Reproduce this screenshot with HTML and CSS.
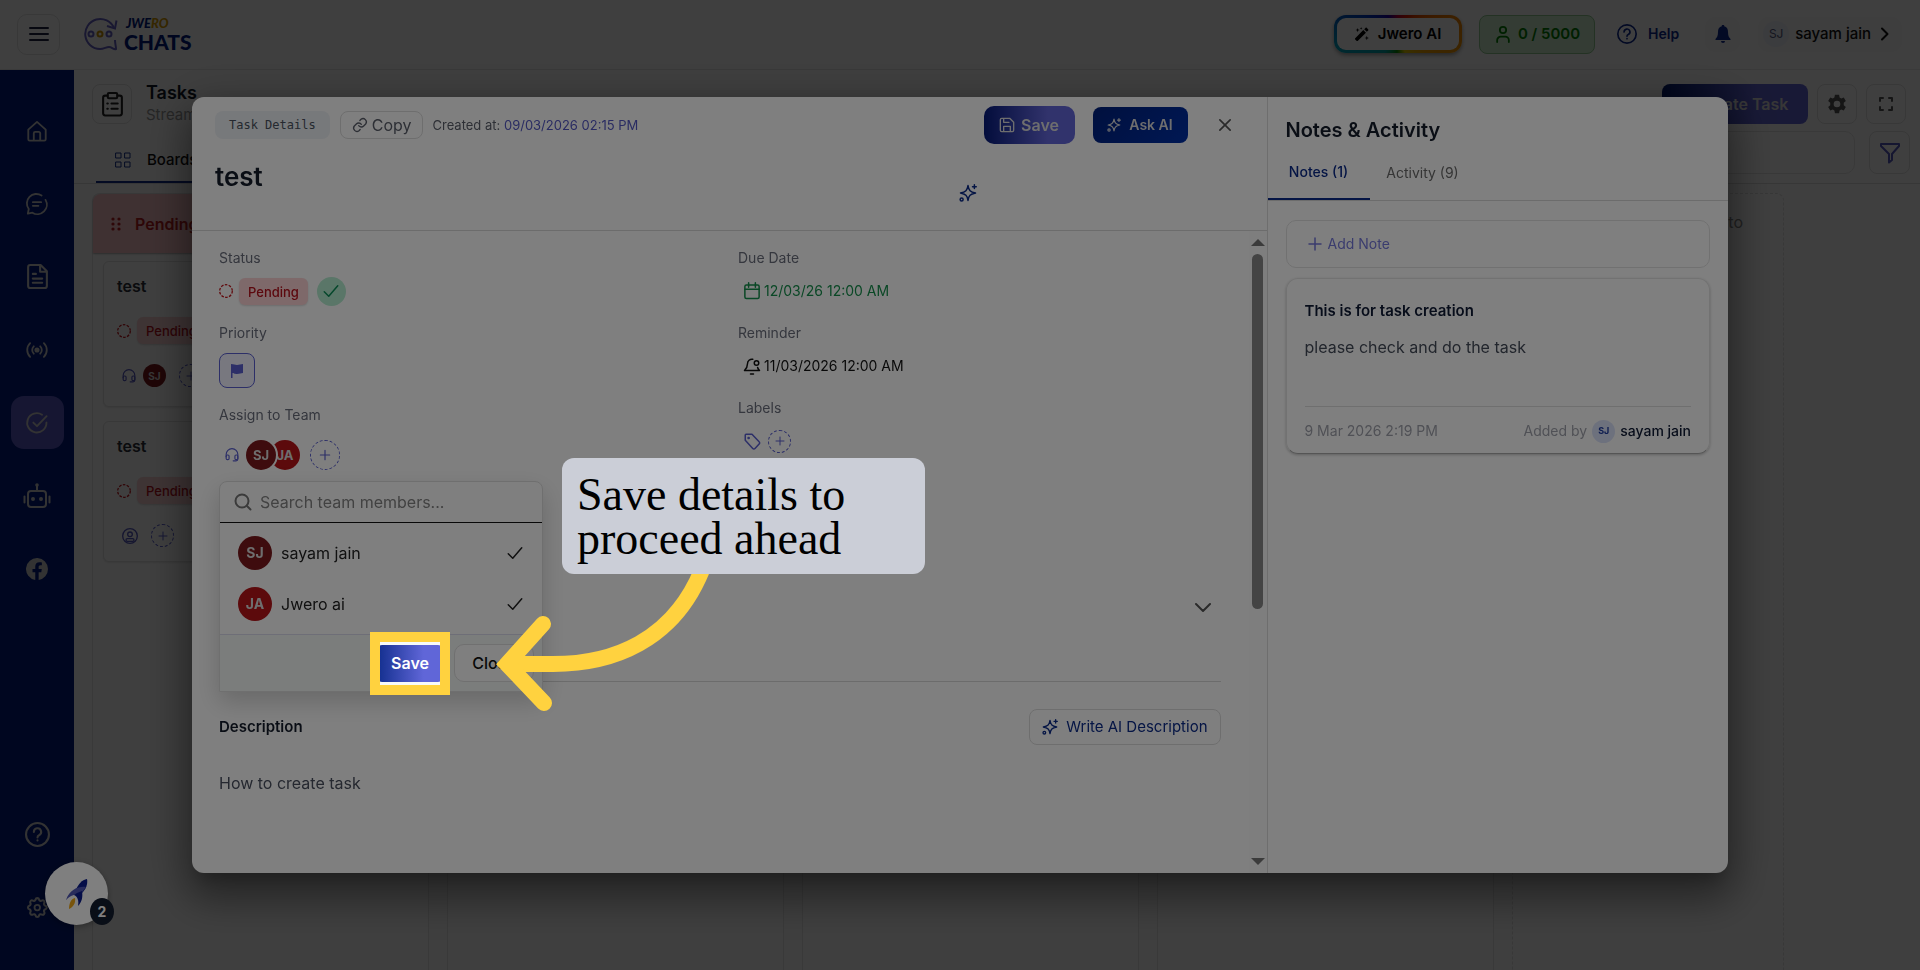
FILE: index.html
```
<!DOCTYPE html>
<html lang="en">
<head>
<meta charset="utf-8">
<title>Jwero Chats - Tasks</title>
<link rel="stylesheet" href="styles.css">
</head>
<body>
<svg class="sprite" aria-hidden="true">
  <symbol id="i-plus" viewBox="0 0 24 24"><path d="M12 4v16M4 12h16"/></symbol>
  <symbol id="i-check" viewBox="0 0 24 24"><path d="M3 13l6 6L21 5"/></symbol>
  <symbol id="i-ring" viewBox="0 0 14 14"><circle cx="7" cy="7" r="6.300" stroke-width="1.300" stroke-dasharray="2.600 1.360" stroke-linecap="butt"/></symbol>
  <symbol id="i-help" viewBox="0 0 24 24"><circle cx="12" cy="12" r="11"/><path d="M8.500 9.500a3.500 3.500 0 1 1 5 3.200c-1 .5-1.500 1-1.500 2.100M12 17.500v.3"/></symbol>
  <symbol id="i-headset" viewBox="0 0 24 24"><path d="M2 15v-4a10 10 0 0 1 20 0v8a3 3 0 0 1-3 3h-5"/><rect x="2" y="12" width="5" height="8" rx="2"/><rect x="17" y="12" width="5" height="8" rx="2"/></symbol>
  <symbol id="i-spark" viewBox="0 0 24 24"><path d="M12 2c1 6.500 3 8.500 10 10-7 1.500-9 3.500-10 10-1-6.500-3-8.500-10-10 7-1.500 9-3.500 10-10z"/><path d="M20.500 1v5M18 3.500h5"/><circle cx="3.500" cy="20.500" r="2"/></symbol>
</svg>

<div class="app">
  <header class="topbar">
    <button class="menu" aria-label="Menu"><svg class="ic s20" viewBox="0 0 20 20"><path d="M1 4h18M1 10h18M1 16h18"/></svg></button>
    <a class="logo" href="#" aria-label="Jwero Chats">
      <svg class="logo-mark" viewBox="0 0 34 34"><path d="M30 11A15 15 0 1 0 16 32c4 0 6-2 9-2 3 0 5 3 7 2 0-3-1-5-1-9"/><path d="M23 9l8 2.500 1.500-8"/><circle cx="7" cy="17" r="2.500"/><circle cx="25" cy="17" r="2.500"/><circle class="gold" cx="16" cy="17" r="2.500"/></svg>
      <span class="logo-text"><span class="logo-small">JWE<b>RO</b></span><span class="logo-big">CHATS</span></span>
    </a>
    <div class="top-right">
      <button class="ai"><svg class="s14 solid" viewBox="0 0 16 16"><path d="M0 13L9.500 3.500l3 3L3 16H2l-2-2zM10.500 2.500l1.500-1.500c.5-.5 1-.5 1.500 0l1.500 1.500c.5.5.5 1 0 1.500l-1.500 1.500zM3 1l.6 1.900 1.900.6-1.900.6L3 6l-.6-1.900L.5 3.500l1.900-.6zM13.500 10l.6 1.900 1.900.6-1.900.6-.6 1.900-.6-1.900-1.900-.6 1.900-.6zM7 0l.4 1.100 1.100.4-1.100.4L7 3l-.4-1.100-1.100-.4 1.100-.4z"/></svg>Jwero AI</button>
      <span class="quota"><svg class="ic s18" viewBox="0 0 20 20"><circle cx="10" cy="5.500" r="3.500"/><path d="M3.500 19v-2a4 4 0 0 1 4-4h5a4 4 0 0 1 4 4v2"/></svg>0 / 5000</span>
      <a class="help" href="#"><svg class="ic s20"><use href="#i-help"/></svg>Help</a>
      <button class="bell" aria-label="Notifications"><svg class="s20 solid" viewBox="0 0 20 20"><path d="M10 1a1 1 0 0 1 1.200 1.200C14 3 15 5 15 8c0 4 1 5.500 2.500 7v1h-15v-1C4 13.500 5 12 5 8c0-3 1-5 3.800-5.800A1 1 0 0 1 10 1zM8 17h4a2 2 0 0 1-4 0z"/></svg></button>
      <button class="user"><span class="user-av">SJ</span>sayam jain<svg class="ic s14" viewBox="0 0 14 14"><path d="M5 1.500l5.500 5.500L5 12.500"/></svg></button>
    </div>
  </header>

  <div class="body">
    <nav class="side">
      <a href="#" aria-label="Home"><svg class="ic s24" viewBox="0 0 24 24"><path d="M2.500 10.500L12 2l9.500 8.500V21a1.500 1.500 0 0 1-1.500 1.500H4A1.500 1.500 0 0 1 2.500 21z"/><path d="M8.500 22v-7.500a1.500 1.500 0 0 1 1.500-1.500h4a1.500 1.500 0 0 1 1.500 1.500V22"/></svg></a>
      <a href="#" aria-label="Chats"><svg class="ic s24" viewBox="0 0 24 24"><path d="M17 2.800A10.300 10.300 0 0 0 3 17.500L2 22.500l5-1A10.300 10.300 0 0 0 21.300 7.500"/><path d="M7.500 10h9M7.500 14h6"/></svg></a>
      <a href="#" aria-label="Templates"><svg class="ic s26" viewBox="0 0 24 24"><path d="M15 1H5a2 2 0 0 0-2 2v18a2 2 0 0 0 2 2h14a2 2 0 0 0 2-2V7zM14.500 1v6.500H21M7.500 9.500h3M7.500 14h9M7.500 18h9"/></svg></a>
      <a href="#" aria-label="Broadcast"><svg class="ic s24" viewBox="0 0 24 24"><circle class="dot" cx="12" cy="12" r="1.800"/><path d="M8.500 8a5.500 5.500 0 0 0 0 8M15.500 8a5.500 5.500 0 0 1 0 8M4.500 4.500a10.500 10.500 0 0 0 0 15M19.500 4.500a10.500 10.500 0 0 1 0 15"/></svg></a>
      <a href="#" class="on" aria-label="Tasks"><svg class="ic s24" viewBox="0 0 24 24"><path d="M22.300 11.500A10.500 10.500 0 1 1 17.500 3"/><path d="M8 11.500l4 4L22.500 4.500"/></svg></a>
      <a href="#" aria-label="Bot"><svg class="ic s28" viewBox="0 0 28 28"><rect x="5" y="9" width="18" height="16" rx="3"/><path d="M14 9V4M1.500 14.500v6M26.500 14.500v6"/><circle class="dot" cx="14" cy="3" r=".8"/><circle class="dot" cx="10" cy="17" r="1"/><circle class="dot" cx="18" cy="17" r="1"/></svg></a>
      <a href="#" aria-label="Facebook"><svg class="s24 solid" viewBox="0 0 24 24"><path d="M24 12a12 12 0 1 0-13.900 11.900v-8.400H7.100V12h3V9.400c0-3 1.800-4.700 4.500-4.700 1.300 0 2.700.2 2.700.2v3h-1.500c-1.500 0-2 .9-2 1.900V12h3.400l-.5 3.500h-2.900v8.400A12 12 0 0 0 24 12z"/></svg></a>
      <a href="#" class="push" aria-label="Help"><svg class="ic s26"><use href="#i-help"/></svg></a>
      <a href="#" aria-label="Settings"><svg class="ic s24" viewBox="0 0 24 24"><path d="M10.300 3.200c.4-1.800 3-1.800 3.400 0a1.700 1.700 0 0 0 2.600 1.100c1.500-1 3.300.8 2.400 2.400a1.700 1.700 0 0 0 1 2.500c1.800.5 1.800 3 0 3.500a1.700 1.700 0 0 0-1 2.600c.9 1.500-.9 3.300-2.400 2.400a1.700 1.700 0 0 0-2.600 1c-.4 1.800-3 1.800-3.400 0a1.700 1.700 0 0 0-2.600-1c-1.500.9-3.300-.9-2.400-2.400a1.700 1.700 0 0 0-1-2.600c-1.800-.5-1.800-3 0-3.500a1.700 1.700 0 0 0 1-2.500c-.9-1.600.9-3.400 2.400-2.400a1.700 1.700 0 0 0 2.600-1.100z" transform="translate(-1.200 -.9) scale(1.130)"/><circle cx="12.300" cy="11.500" r="3"/></svg></a>
    </nav>

    <main class="main">
      <div class="page-head">
        <span class="box clip"><svg class="ic s26" viewBox="0 0 24 24"><rect x="3" y="3.500" width="18" height="19" rx="2"/><rect class="fillbg" x="7.500" y="1" width="9" height="5" rx="1"/><path d="M7 11h.5M11 11h6M7 16h.5M11 16h6"/></svg></span>
        <div class="page-title"><h1>Tasks</h1><p>Streamline your tasks</p></div>
        <div class="page-actions">
          <button class="create">+ Create Task</button>
          <button class="box" aria-label="Settings"><svg class="s20 solid" viewBox="0 0 24 24"><path fill-rule="evenodd" d="M9.500 1h5l.6 3.200 2 1.100 3-1.100 2.500 4.300-2.500 2.100v2.800l2.500 2.100-2.500 4.300-3-1.100-2 1.100-.6 3.200h-5l-.6-3.200-2-1.100-3 1.100-2.500-4.300 2.500-2.100v-2.800L1.400 8.500l2.500-4.300 3 1.100 2-1.100zM12 8a4 4 0 1 0 0 8 4 4 0 0 0 0-8z"/></svg></button>
          <button class="box" aria-label="Full screen"><svg class="ic s14" viewBox="0 0 14 14"><path d="M1 4V1h3M10 1h3v3M13 10v3h-3M4 13H1v-3"/></svg></button>
        </div>
      </div>
      <div class="tabs-row">
        <a class="tab" href="#"><svg class="ic s16" viewBox="0 0 16 16"><rect x="1" y="1" width="5" height="5"/><rect x="10" y="1" width="5" height="5"/><rect x="1" y="10" width="5" height="5"/><rect x="10" y="10" width="5" height="5"/></svg>Boards</a>
        <div class="filters"><input class="find" type="search" aria-label="Search tasks"><button class="box filter" aria-label="Filter"><svg class="ic s20" viewBox="0 0 20 20"><path d="M1 1h18v2l-7 8v6l-3 2.500V11L1 3z"/></svg></button></div>
      </div>
      <div class="board">
        <section class="col">
          <h2 class="col-head"><svg class="s14 solid" viewBox="0 0 14 14"><circle cx="4" cy="2" r="1.600"/><circle cx="10" cy="2" r="1.600"/><circle cx="4" cy="7" r="1.600"/><circle cx="10" cy="7" r="1.600"/><circle cx="4" cy="12" r="1.600"/><circle cx="10" cy="12" r="1.600"/></svg>Pending</h2>
          <article class="card">
            <h3>test</h3>
            <div class="status"><svg class="ic s14 ring"><use href="#i-ring"/></svg><span class="chip">Pending</span></div>
            <div class="team"><svg class="ic s14"><use href="#i-headset"/></svg><span class="av av-sm">SJ</span><button class="add add-sm" aria-label="Add member"><svg class="ic s12"><use href="#i-plus"/></svg></button></div>
          </article>
          <article class="card card-short">
            <h3>test</h3>
            <div class="status"><svg class="ic s14 ring"><use href="#i-ring"/></svg><span class="chip">Pending</span></div>
            <div class="team"><svg class="ic s16" viewBox="0 0 24 24"><circle cx="12" cy="12" r="11"/><circle cx="12" cy="9.500" r="3.500"/><rect x="6" y="16" width="12" height="4" rx="2"/></svg><button class="add add-sm" aria-label="Add member"><svg class="ic s12"><use href="#i-plus"/></svg></button></div>
          </article>
        </section>
        <section class="col"></section><section class="col"></section><section class="col"></section>
        <section class="col col-new"><p>Add a new column to</p></section>
      </div>
    </main>
  </div>
</div>

<div class="backdrop"></div>

<button class="rocket" aria-label="Getting started">
  <svg viewBox="0 0 24 32"><path class="r1" d="M22 1c-5 1-9 5-11 11l6 3c4-4 6-9 5-14z"/><path class="r2" d="M21 9c-7-1-16 2-20 13 4-5 9-6 14-5z"/><path class="r1" d="M12 15l5-2c1 6 0 11-4 15 1-5 0-9-4-11z"/><path class="r3" d="M10 20c-4 1-6 5-6 11 4-2 7-6 6-11z"/></svg>
  <span class="count">2</span>
</button>

<div class="modal" role="dialog" aria-label="Task details">
  <section class="detail">
    <header class="d-head">
      <div class="d-bar">
        <span class="tag">Task Details</span>
        <button class="copy"><svg class="ic s16" viewBox="0 0 24 24"><path d="M10 13a5 5 0 0 0 7.500.5l3-3a5 5 0 0 0-7-7l-1.700 1.700M14 11a5 5 0 0 0-7.500-.5l-3 3a5 5 0 0 0 7 7l1.700-1.700"/></svg>Copy</button>
        <span class="created">Created at: <b>09/03/2026 02:15 PM</b></span>
        <div class="d-actions">
          <button class="save"><svg class="ic s16" viewBox="0 0 24 24"><path d="M2 4a2 2 0 0 1 2-2h12l6 6v12a2 2 0 0 1-2 2H4a2 2 0 0 1-2-2zM7 2v6h8M7 22v-8h10v8"/></svg>Save</button>
          <button class="ask"><svg class="ic s14"><use href="#i-spark"/></svg>Ask AI</button>
          <button class="close" aria-label="Close dialog"><svg class="ic s12" viewBox="0 0 14 14"><path d="M1 1l12 12M13 1L1 13"/></svg></button>
        </div>
      </div>
      <div class="d-title"><h2>test</h2><button class="improve" aria-label="Improve title"><svg class="ic s18"><use href="#i-spark"/></svg></button></div>
    </header>
    <div class="d-scroll">
      <div class="d-body">
        <div class="fields">
          <div class="fcol">
            <h4>Status</h4>
            <div class="row"><svg class="ic s14 ring"><use href="#i-ring"/></svg><span class="chip">Pending</span><button class="done" aria-label="Mark done"><svg class="ic s18"><use href="#i-check"/></svg></button></div>
            <h4>Priority</h4>
            <div class="row prio"><button class="flag" aria-label="Set priority"><svg class="s14 solid" viewBox="0 0 14 14"><path d="M1 0c3 0 4 1 6 1s4-1 6-1v9c-2 0-3 1-6 1S4 9 2.500 9v5H1z"/></svg></button></div>
            <h4>Assign to Team</h4>
            <div class="row assign"><svg class="ic s14"><use href="#i-headset"/></svg><span class="avs"><span class="av">SJ</span><span class="av red">JA</span></span><button class="add" aria-label="Add member"><svg class="ic s14"><use href="#i-plus"/></svg></button></div>
            <div class="anchor"><div class="drop">
              <label class="search"><svg class="ic s18" viewBox="0 0 18 18"><circle cx="8" cy="8" r="6.500"/><path d="M13 13l3.500 3.500"/></svg><input type="text" placeholder="Search team members..." aria-label="Search team members"></label>
              <ul>
                <li><span class="av av-lg">SJ</span>sayam jain<svg class="ic s18"><use href="#i-check"/></svg></li>
                <li><span class="av av-lg red">JA</span>Jwero ai<svg class="ic s18"><use href="#i-check"/></svg></li>
              </ul>
              <footer>
                <div class="step">
                  <button class="save-sm">Save</button>
                  <div class="spot"></div>
                  <svg class="arrow" viewBox="0 0 220 150"><path d="M209 5C180 76 120 99 60 99L20 99"/><path d="M50 59L14 99l37 39"/></svg>
                  <p class="callout">Save details to proceed ahead</p>
                </div>
                <button class="close-sm">Close</button>
              </footer>
            </div></div>
          </div>
          <div class="fcol">
            <h4>Due Date</h4>
            <div class="row val due"><svg class="ic s18" viewBox="0 0 24 24"><rect x="2.500" y="4" width="19" height="18" rx="2"/><path d="M2.500 9.500h19M7.500 1v6M16.500 1v6"/></svg>12/03/26 12:00 AM</div>
            <h4>Reminder</h4>
            <div class="row val rem"><svg class="ic s18" viewBox="0 0 24 24"><path d="M13 3a6 6 0 0 0-7 6c0 5-2 7-4 9h20c-1-1-2-2-2.500-4M10 22.500h4"/><circle cx="18" cy="8" r="3"/></svg>11/03/2026 12:00 AM</div>
            <h4>Labels</h4>
            <div class="row val lab"><svg class="ic s18" viewBox="0 0 24 24"><path d="M3 4v7l10 11a2 2 0 0 0 3 0l5.500-6a2 2 0 0 0 0-3L12 3H4a1 1 0 0 0-1 1z"/><circle class="dot" cx="7.500" cy="8" r=".8"/></svg><button class="add add-sm" aria-label="Add label"><svg class="ic s12"><use href="#i-plus"/></svg></button></div>
          </div>
        </div>
        <button class="more" aria-label="Show more"><svg class="ic s16" viewBox="0 0 16 16"><path d="M1 4l7 7 7-7"/></svg></button>
        <hr>
        <div class="desc-head"><h3>Description</h3><button class="write"><svg class="ic s16"><use href="#i-spark"/></svg>Write AI Description</button></div>
        <p class="desc">How to create task</p>
      </div>
      <div class="bar" aria-hidden="true"><i class="up"></i><i class="thumb"></i><i class="down"></i></div>
    </div>
  </section>
  <aside class="notes">
    <h2>Notes &amp; Activity</h2>
    <div class="ntabs"><button class="on">Notes (1)</button><button>Activity (9)</button></div>
    <div class="nbody">
      <button class="addnote"><svg class="ic s18"><use href="#i-plus"/></svg>Add Note</button>
      <article class="note">
        <h3>This is for task creation</h3>
        <p>please check and do the task</p>
        <footer><time>9 Mar 2026 2:19 PM</time><span class="by">Added by<span class="by-av">SJ</span><b>sayam jain</b></span></footer>
      </article>
    </div>
  </aside>
</div>
</body>
</html>
```

FILE: styles.css
```
* { box-sizing: border-box; margin: 0; padding: 0; }
html, body { height: 100%; }
body { overflow: hidden; background: #fff; color: #111827; font: 14px/20px Inter, "Noto Sans", sans-serif; }
button, input { font: inherit; color: inherit; background: none; border: 0; outline: 0; }
a { color: inherit; text-decoration: none; }
ul { list-style: none; }
.sprite { display: none; }
.ic { fill: none; stroke: currentColor; stroke-width: 2; stroke-linecap: round; stroke-linejoin: round; flex: none; overflow: visible; }
.solid { fill: currentColor; flex: none; }
.dot { fill: currentColor; }
.s12 { width: 12px; height: 12px; }
.s14 { width: 14px; height: 14px; }
.s16 { width: 16px; height: 16px; }
.s18 { width: 18px; height: 18px; }
.s20 { width: 20px; height: 20px; }
.s24 { width: 22px; height: 22px; }
.s26 { width: 25px; height: 25px; }
.s28 { width: 28px; height: 28px; }

.app { height: 100%; display: flex; flex-direction: column; }
.topbar { height: 70px; flex: none; display: flex; align-items: center; padding: 0 18px 1px 17px; border-bottom: 1px solid #e8e8e8; }
.menu { width: 43px; height: 41px; border: 1px solid #e2e2e2; border-radius: 10px; display: grid; place-items: center; color: #1f2340; }
.logo { display: flex; align-items: center; gap: 6px; margin-left: 24px; color: #00187c; }
.logo-mark { width: 34px; height: 34px; fill: none; stroke: #6460c4; stroke-width: 2; }
.logo-mark .gold { stroke: #c89000; }
.logo-text { display: flex; flex-direction: column; font-family: Lato, sans-serif; font-weight: 900; }
.logo-small { font-size: 13px; line-height: 15px; font-style: italic; padding-left: 2px; }
.logo-small b { color: #d69b00; font-weight: 900; }
.logo-big { font-size: 21px; line-height: 21px; }
.top-right { margin-left: auto; display: flex; align-items: center; }
.ai { width: 128px; height: 38px; display: flex; align-items: center; justify-content: center; gap: 9px; font-size: 15px; font-weight: 600; color: #000; border: 3px solid transparent; border-radius: 12px; background: linear-gradient(#fff, #fff) padding-box, conic-gradient(from 0deg, #b03, #e02000 8%, #f08000 20%, #f0a000 34%, #e0c800 44%, #080 51%, #00a0a0 60%, #00a0c0 72%, #0030c0 84%, #2000a0 92%, #b03) border-box; box-shadow: 0 2px 4px rgba(0,0,0,.4); }
.quota { width: 116px; height: 39px; margin-left: 17px; display: flex; align-items: center; justify-content: center; gap: 6px; background: #d0f0d0; border: 1px solid #90c890; border-radius: 8px; color: #008000; font-size: 15px; font-weight: 600; }
.help { margin-left: 22px; display: flex; align-items: center; gap: 11px; color: #0c2890; font-weight: 600; }
.bell { width: 35px; height: 35px; margin-left: 26px; border-radius: 10px; background: #f8f8f8; color: #0c2890; display: grid; place-items: center; }
.user { height: 35px; margin-left: 18px; padding: 0 11px 0 5px; display: flex; align-items: center; gap: 6px; border-radius: 10px; background: #f8f8f8; font-size: 15px; font-weight: 500; color: #111; }
.user-av { width: 26px; height: 26px; border-radius: 50%; background: #eef0fa; display: grid; place-items: center; font-size: 12px; font-weight: 400; color: #555c80; }

.body { flex: 1; min-height: 0; display: flex; }
.side { width: 74px; flex: none; background: #001a80; display: flex; flex-direction: column; align-items: center; gap: 20px; padding: 34px 0 36px; color: #ccc; }
.side a { width: 53px; height: 53px; display: grid; place-items: center; border-radius: 13px; }
.side .on { background: #5a5ac8; }
.side .push { margin-top: auto; }
.main { flex: 1; min-width: 0; display: flex; flex-direction: column; }
.page-head { height: 54px; flex: none; display: flex; align-items: center; padding: 14px 14px 0 18px; }
.box { width: 40px; height: 40px; flex: none; display: grid; place-items: center; border: 1px solid #e0e0e0; border-radius: 8px; color: #555; }
.clip { color: #222; }
.fillbg { fill: #fff; }
.page-title { margin-left: 14px; }
h1 { font-size: 18px; line-height: 22px; font-weight: 600; color: #111827; }
.page-title p { line-height: 22px; color: #999; font-size: 15px; }
.page-actions { margin-left: auto; display: flex; gap: 9px; }
.create { width: 146px; height: 40px; border-radius: 8px; color: #ddd; font-size: 16px; font-weight: 600; background: linear-gradient(90deg, #00186c, #6366d8 65%); }
.tabs-row { height: 60px; flex: none; display: flex; justify-content: space-between; border-bottom: 1px solid #ddd; padding: 0 10px 0 22px; }
.tab { width: 140px; display: flex; align-items: center; gap: 16px; padding: 15px 18px 0 19px; font-size: 15px; font-weight: 500; color: #111; border-bottom: 2px solid #102d8c; }
.tab .ic { color: #102d8c; stroke-width: 1; }
.filters { display: flex; gap: 14px; padding-top: 7px; }
.find { width: 300px; height: 43px; border: 1px solid #e5e5e5; border-radius: 10px; }
.filter { height: 43px; width: 41px; color: #5558c0; }
.board { flex: 1; min-height: 0; display: flex; gap: 18px; padding: 9px 10px 0 18px; background: #fdfdfd; }
.col { width: 337px; flex: none; background: #fff; border: 1px solid #e6e6e6; border-bottom: 0; border-radius: 8px 8px 0 0; }
.col-new { width: 272px; border: 1px dashed #e0e0e0; border-bottom: 0; padding: 18px 40px 0 20px; font-size: 16px; color: #888; text-align: right; }
.col-head { height: 59px; display: flex; align-items: center; gap: 12px; padding: 0 16px; border-radius: 8px 8px 0 0; background: #fcc4c8; color: #b81c20; font-size: 16px; font-weight: 600; box-shadow: 0 1px 2px rgba(0,0,0,.3); }
.card { height: 146px; margin: 8px 10px 14px; padding: 14px 13px; border: 1px solid #e2e2e2; border-radius: 6px; background: #fff; box-shadow: 0 1px 2px rgba(0,0,0,.1); }
.card-short { height: 141px; }
.card h3 { font-size: 16px; line-height: 20px; font-weight: 600; color: #2a2e38; }
.status { display: flex; align-items: center; gap: 6px; margin-top: 21px; }
.ring { color: #c4161c; }
.chip { padding: 4px 9px; line-height: 20px; height: 27px; border-radius: 6px; background: #fdd3d4; color: #b9101c; font-size: 13px; font-weight: 500; box-shadow: 0 1px 2px rgba(0,0,0,.15); }
.team { display: flex; align-items: center; gap: 7px; margin-top: 20px; padding-left: 5px; color: #5558c0; }
.av { width: 30px; height: 30px; flex: none; border-radius: 50%; display: grid; place-items: center; background: #7c191c; color: #ddd; font-size: 13px; font-weight: 700; }
.av-sm { width: 23px; height: 23px; font-size: 10px; }
.av-lg { width: 34px; height: 34px; font-size: 14px; }
.red { background: #b81418; }
.add { width: 30px; height: 30px; flex: none; border: 1px dashed #5a5fd0; border-radius: 50%; display: grid; place-items: center; color: #5a5fd0; }
.add-sm { width: 23px; height: 23px; }
.team .add { margin-left: 6px; }

.backdrop { position: fixed; inset: 0; background: rgba(0,0,0,.5); }
.rocket { position: fixed; left: 45px; bottom: 45px; width: 63px; height: 63px; border-radius: 50%; background: #fff; display: grid; place-items: center; box-shadow: 0 2px 6px rgba(0,0,0,.3); }
.rocket svg { width: 24px; height: 32px; }
.r1 { fill: #0a1c90; }
.r2 { fill: #5058b8; }
.r3 { fill: #f0a818; }
.count { position: absolute; right: -6px; bottom: 0; width: 24px; height: 27px; border-radius: 50%; background: #131c2e; color: #fff; font-size: 14px; font-weight: 700; line-height: 28px; text-align: center; }

.modal { position: fixed; left: 10%; top: 10%; width: 80%; height: 80%; display: flex; background: #fff; border-radius: 12px; box-shadow: 0 11px 15px -7px rgba(0,0,0,.2), 0 24px 38px 3px rgba(0,0,0,.3), 0 9px 46px 8px rgba(0,0,0,.2); }
.detail { flex: 7; min-width: 0; display: flex; flex-direction: column; }
.d-head { height: 134px; flex: none; padding: 9px 29px 0 23px; border-bottom: 1px solid #d9d9d9; }
.d-bar { display: flex; align-items: center; height: 38px; }
.tag { padding: 4px 14px; border-radius: 8px; background: #eff2f6; color: #4a5360; font: 12px/20px "DejaVu Sans Mono", monospace; }
.copy { height: 28px; margin: 0 9px 0 10px; padding: 0 11px; display: flex; align-items: center; gap: 4px; border: 1px solid #dcdcdc; border-radius: 8px; color: #5b5f6b; font-size: 16px; }
.created { color: #5b5f6b; font-size: 13px; }
.created b { color: #5357c4; font-weight: 400; }
.d-actions { margin-left: auto; display: flex; align-items: center; }
.save { width: 91px; height: 38px; display: flex; align-items: center; justify-content: center; gap: 6px; border-radius: 10px; background: linear-gradient(90deg, #061a78, #6366d8 70%); color: #ddd; font-size: 16px; font-weight: 600; }
.ask { width: 95px; height: 36px; margin-left: 18px; display: flex; align-items: center; justify-content: center; gap: 8px; border-radius: 8px; background: linear-gradient(135deg, #00207c, #0030a8); color: #ddd; font-weight: 600; }
.close { width: 26px; height: 26px; margin-left: 24px; display: grid; place-items: center; color: #555; }
.d-title { display: flex; align-items: center; height: 83px; padding-top: 15px; }
.d-title h2 { width: 744px; align-self: flex-start; font-size: 26px; line-height: 36px; font-weight: 600; color: #141c2b; }
.improve { height: 18px; color: #0a2a8a; }
.d-scroll { flex: 1; min-height: 0; display: flex; }
.d-body { flex: 1; padding: 16px 28px 0 27px; }
.fields { display: grid; grid-template-columns: 519px 1fr; height: 339px; }
h4 { font-size: 14px; line-height: 22px; font-weight: 400; color: #6a6e7c; }
.row { height: 53px; display: flex; align-items: center; gap: 6px; }
.fcol > .row { padding-bottom: 9px; }
.done { width: 29px; height: 29px; margin-left: 3px; border-radius: 50%; background: #b5ecd0; color: #0b9058; display: grid; place-items: center; }
.fcol > .prio { height: 60px; padding-bottom: 7px; }
.flag { width: 36px; height: 35px; border: 1px solid #5a5fd0; border-radius: 8px; background: #f0f1fe; color: #5a5fd0; display: grid; place-items: center; }
.fcol > .assign { height: 55px; padding: 2px 0 0 6px; color: #5a5fd0; }
.avs { display: flex; margin-left: 1px; }
.avs .av { position: relative; }
.avs .av:first-child { z-index: 1; box-shadow: 0 0 0 2px #fff; }
.avs .av + .av { margin-left: -6px; }
.assign .add { margin-left: 4px; }
.val { padding-left: 5px; gap: 3px; }
.due { color: #15904c; }
.rem { color: #111; }
.lab { color: #5a5fd0; gap: 7px; }
.anchor { position: relative; }
.drop { position: absolute; top: 0; left: 0; width: 324px; background: #fff; border: 1px solid #dedede; border-radius: 8px 8px 0 0; box-shadow: 0 10px 24px rgba(0,0,0,.18); }
.search { height: 41px; display: flex; align-items: center; gap: 8px; padding: 0 14px; color: #777; border-bottom: 1px solid #111; font-size: 16px; }
.search input { flex: 1; min-width: 0; }
.search input::placeholder { color: #848484; }
.drop ul { padding: 4px 0 5px; }
.drop li { height: 51px; display: flex; align-items: center; gap: 9px; padding: 0 18px; font-size: 16px; color: #222; }
.drop li .ic { margin-left: auto; }
.drop footer { height: 57px; display: flex; align-items: center; justify-content: flex-end; gap: 10px; padding-right: 8px; background: #f7faf9; border-top: 1px solid #dde; }
.step { position: relative; }
.save-sm { width: 68px; height: 37px; border-radius: 6px; background: linear-gradient(90deg, #102d8c, #6066d8 70%); color: #fff; font-size: 16px; font-weight: 600; display: block; }
.close-sm { width: 80px; height: 38px; border: 1px solid #e0e0e0; border-radius: 10px; background: #fff; font-size: 16px; font-weight: 500; color: #111; }
.spot { position: absolute; z-index: 5; left: -6px; top: -13px; width: 80px; height: 63px; border: 10px solid #ffd23f; box-shadow: 0 0 0 3000px rgba(0,0,0,.5); }
.arrow { position: absolute; z-index: 6; left: 117px; top: -80px; width: 220px; height: 150px; fill: none; stroke: #ffd23f; stroke-width: 16; stroke-linecap: round; }
.callout { position: absolute; z-index: 7; left: 186px; top: -187px; width: 363px; height: 116px; padding: 15px; border-radius: 12px; background: #cbced7; color: #000; font: 46px/44px "Liberation Serif", serif; }
.more { display: block; margin: 0 10px 0 auto; height: 48px; color: #555; }
hr { border: 0; border-top: 1px solid #d8d8d8; margin-top: 47px; }
.desc-head { display: flex; align-items: center; justify-content: space-between; margin-top: 27px; }
.desc-head h3 { font-size: 15px; font-weight: 600; color: #141c2b; }
.write { height: 36px; padding: 0 12px; display: flex; align-items: center; gap: 8px; border: 1px solid #dcdcdc; border-radius: 8px; color: #0a2a8a; font-size: 15px; }
.desc { margin-top: 28px; font-size: 16px; color: #4a5060; }
.bar { width: 18px; display: flex; flex-direction: column; align-items: center; padding: 8px 0; background: #fdfdfd; }
.up, .down { border: 7px solid transparent; border-top: 0; border-bottom: 7px solid #777; }
.thumb { width: 11px; height: 355px; margin-top: 8px; border-radius: 6px; background: #888; }
.down { border-top: 7px solid #777; border-bottom: 0; margin-top: auto; }

.notes { flex: 3; min-width: 0; border-left: 1px solid #dcdcdc; }
.notes h2 { padding: 20px 18px 0; font-size: 20px; line-height: 26px; font-weight: 600; color: #141c2b; }
.ntabs { height: 58px; display: flex; border-bottom: 1px solid #d9d9d9; }
.ntabs button { padding: 2px 0 0; width: 106px; color: #6a6a6a; }
.ntabs .on { width: 102px; border-bottom: 2px solid #0a2a8a; color: #0a2a8a; font-weight: 500; }
.nbody { padding: 19px 18px; }
.addnote { width: 100%; height: 48px; padding: 0 19px; display: flex; align-items: center; gap: 4px; border: 1px solid #e2e2e2; border-radius: 10px; color: #7578dc; }
.note { margin-top: 10px; height: 176px; padding: 22px 18px 0; display: flex; flex-direction: column; border: 1px solid #e4e4e4; border-bottom-color: #aaa; border-radius: 12px; box-shadow: 0 1px 3px rgba(0,0,0,.25); }
.note h3 { font-size: 15px; line-height: 20px; font-weight: 600; color: #0f1a35; }
.note p { margin-top: 16px; font-size: 16px; color: #454c5a; }
.note footer { margin-top: auto; padding: 12px 0 10px; height: 47px; display: flex; align-items: center; justify-content: space-between; border-top: 1px solid #dedede; color: #a0a2ac; }
.by { display: flex; align-items: center; gap: 5px; }
.by-av { width: 23px; height: 23px; border-radius: 50%; background: #dbe2fb; color: #1c3aa0; display: grid; place-items: center; font-size: 9px; font-weight: 700; }
.by b { font-weight: 500; color: #0f1a35; }
```
